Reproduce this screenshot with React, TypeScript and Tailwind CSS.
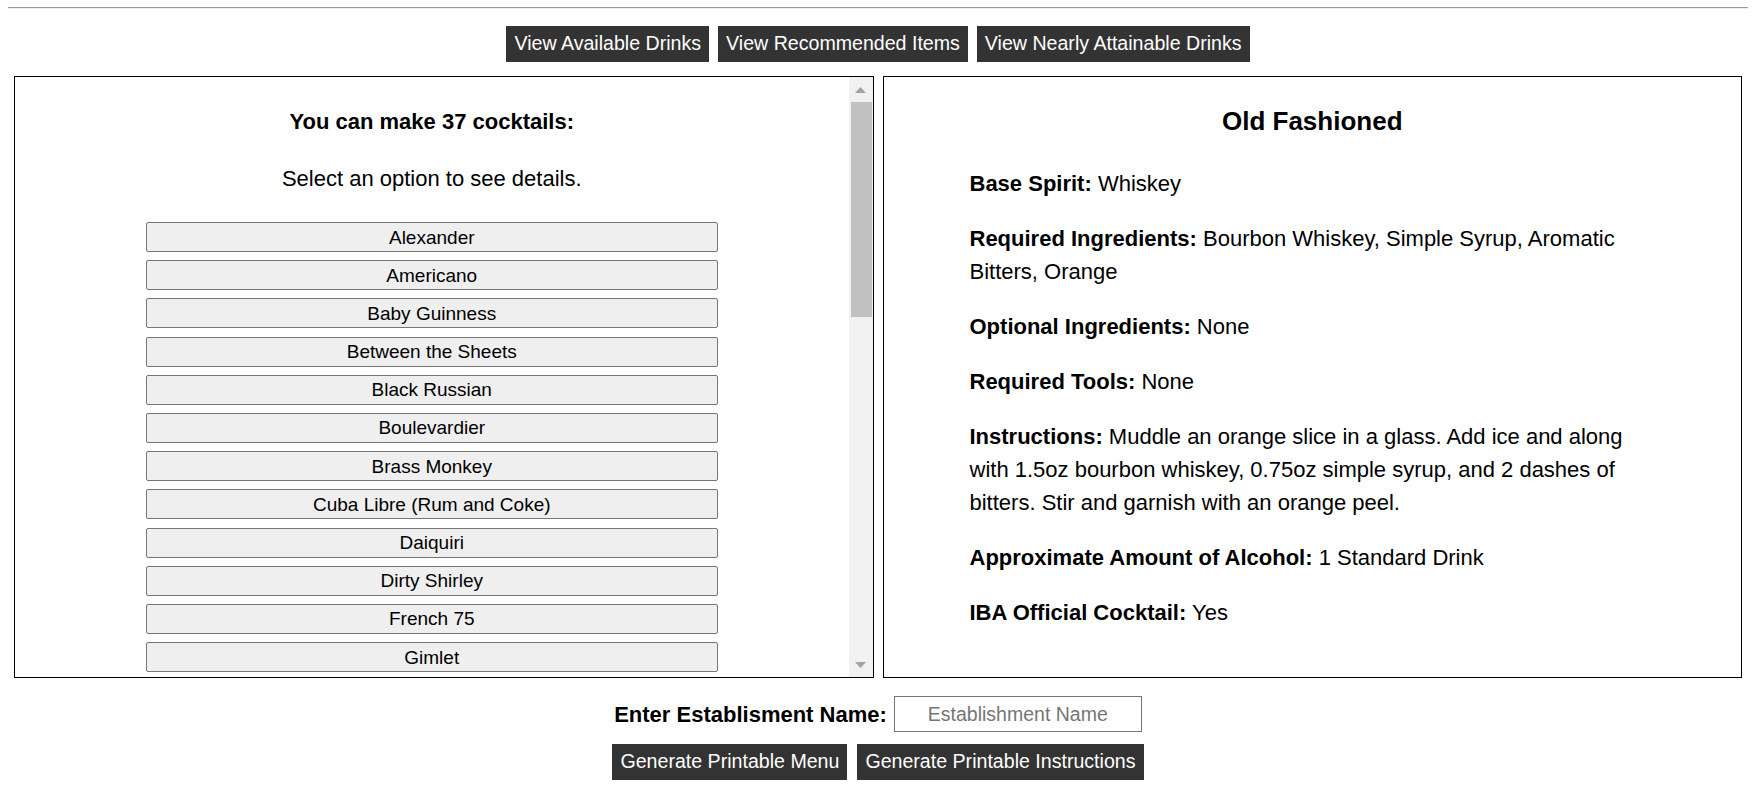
import { useState } from 'react';

const DRINKS = [
  'Alexander', 'Americano', 'Baby Guinness', 'Between the Sheets', 'Black Russian', 'Boulevardier',
  'Brass Monkey', 'Cuba Libre (Rum and Coke)', 'Daiquiri', 'Dirty Shirley', 'French 75', 'Gimlet',
  'Gin and Tonic', 'Godfather', 'Hot Toddy', 'Irish Coffee', 'Kamikaze', 'Lemon Drop', 'Long Island Iced Tea',
  'Manhattan', 'Margarita', 'Martini', 'Mimosa', 'Mint Julep', 'Mojito', 'Moscow Mule', 'Negroni',
  'Old Fashioned', 'Paloma', 'Piña Colada', 'Rob Roy', 'Screwdriver', 'Sidecar', 'Tequila Sunrise',
  'Tom Collins', 'Whiskey Sour', 'White Russian',
];

const DETAILS: { label: string; value: string }[] = [
  { label: 'Base Spirit:', value: 'Whiskey' },
  { label: 'Required Ingredients:', value: 'Bourbon Whiskey, Simple Syrup, Aromatic Bitters, Orange' },
  { label: 'Optional Ingredients:', value: 'None' },
  { label: 'Required Tools:', value: 'None' },
  {
    label: 'Instructions:',
    value: 'Muddle an orange slice in a glass. Add ice and along with 1.5oz bourbon whiskey, 0.75oz simple syrup, and 2 dashes of bitters. Stir and garnish with an orange peel.',
  },
  { label: 'Approximate Amount of Alcohol:', value: '1 Standard Drink' },
  { label: 'IBA Official Cocktail:', value: 'Yes' },
];

function DarkButton({ children }: { children: React.ReactNode }) {
  return (
    <button className="h-[36px] px-[8px] bg-[#333333] text-white text-[19.6px] leading-none whitespace-nowrap">
      {children}
    </button>
  );
}

// barra de scroll dibujada (estilo clásico de Chrome)
function FakeScrollbar() {
  return (
    <div className="w-[24px] shrink-0 bg-[#f1f1f1] flex flex-col">
      <div className="h-[25px] flex items-center justify-center">
        <svg width="11" height="6" viewBox="0 0 11 6"><polygon points="5.5,0 11,6 0,6" fill="#a3a3a3" /></svg>
      </div>
      <div className="pl-[2px] pr-[1px]">
        <div className="h-[215px] bg-[#c1c1c1]" />
      </div>
      <div className="flex-1" />
      <div className="h-[25px] flex items-center justify-center">
        <svg width="11" height="6" viewBox="0 0 11 6"><polygon points="0,0 11,0 5.5,6" fill="#a3a3a3" /></svg>
      </div>
    </div>
  );
}

export default function App() {
  const [name, setName] = useState('');

  return (
    <div className="min-h-screen bg-white text-black font-['Liberation_Sans',Arial,sans-serif]">
      <div className="mx-[8px] pt-[7px]">
        <div className="h-[2px] border-t border-b border-t-[#9a9a9a] border-b-[#eeeeee]" />
      </div>

      <div className="mt-[17px] flex justify-center gap-[9px]">
        <DarkButton>View Available Drinks</DarkButton>
        <DarkButton>View Recommended Items</DarkButton>
        <DarkButton>View Nearly Attainable Drinks</DarkButton>
      </div>

      <div className="mt-[14px] px-[14px] grid grid-cols-2 gap-[9px] h-[602px]">
        {/* lista de cocteles */}
        <div className="min-w-0 border border-black flex overflow-hidden">
          <div className="flex-1 min-w-0 overflow-hidden pt-[27.5px]">
            <p className="text-center text-[22px] leading-[33px] font-bold">You can make 37 cocktails:</p>
            <p className="mt-[24px] text-center text-[22px] leading-[33px]">Select an option to see details.</p>
            <div className="mt-[27.5px] flex flex-col items-center gap-[8.2px]">
              {DRINKS.map((d) => (
                <button
                  key={d}
                  className="w-[572px] h-[30px] shrink-0 border border-[#767676] rounded-[2px] bg-[#efefef] text-[19px] leading-none text-black"
                >
                  {d}
                </button>
              ))}
            </div>
          </div>
          <FakeScrollbar />
        </div>

        {/* detalle */}
        <div className="min-w-0 border border-black px-[86px] pt-[29px]">
          <h2 className="text-center text-[26px] leading-[30px] font-bold">Old Fashioned</h2>
          <div className="mt-[30.5px]">
            {DETAILS.map((it) => (
              <p key={it.label} className="text-[22px] leading-[33px] mb-[22px]">
                <b>{it.label}</b> {it.value}
              </p>
            ))}
          </div>
        </div>
      </div>

      <div className="mt-[18px] flex justify-center items-center gap-[7px]">
        <label className="text-[22px] font-bold">Enter Establisment Name:</label>
        <input
          value={name}
          onChange={(e) => setName(e.target.value)}
          placeholder="Establishment Name"
          className="w-[248px] h-[36px] border border-[#767676] text-center text-[19.5px] placeholder:text-[#757575] outline-none"
        />
      </div>

      <div className="mt-[12px] flex justify-center gap-[10px]">
        <DarkButton>Generate Printable Menu</DarkButton>
        <DarkButton>Generate Printable Instructions</DarkButton>
      </div>
    </div>
  );
}
